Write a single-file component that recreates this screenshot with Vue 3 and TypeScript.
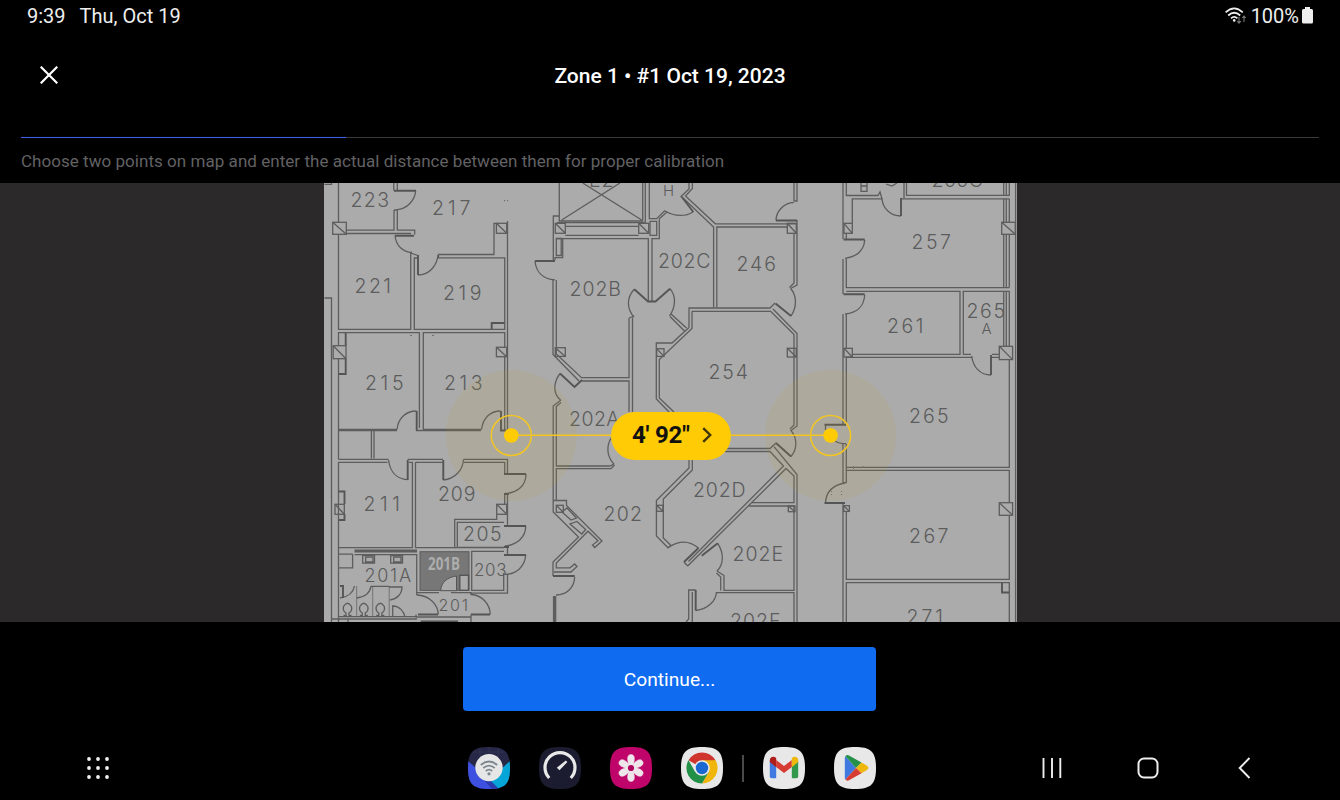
<script setup lang="ts">
interface Label { t: string; x: number; y: number; w: number; s?: number }

// Room labels: centre x, baseline y and drawn width
const labels: Label[] = [
  { t: '223', x: 369.5, y: 207, w: 36 },
  { t: '217', x: 451, y: 215, w: 36 },
  { t: '221', x: 372.5, y: 293, w: 34 },
  { t: '219', x: 462, y: 300, w: 36 },
  { t: '215', x: 384, y: 389.5, w: 36 },
  { t: '213', x: 463, y: 389.5, w: 36 },
  { t: '211', x: 381.5, y: 511, w: 34 },
  { t: '209', x: 456.5, y: 501, w: 35 },
  { t: '205', x: 482, y: 540.5, w: 36 },
  { t: '203', x: 490, y: 576, w: 30, s: 17 },
  { t: '201A', x: 387.5, y: 581.5, w: 44, s: 18 },
  { t: '201', x: 453, y: 611, w: 27, s: 16 },
  { t: '202B', x: 595, y: 296, w: 49 },
  { t: '202C', x: 684, y: 267.5, w: 50 },
  { t: '246', x: 756, y: 271, w: 37 },
  { t: '254', x: 728, y: 378.5, w: 37 },
  { t: '202A', x: 594, y: 425.5, w: 48 },
  { t: '202', x: 622.5, y: 521, w: 36 },
  { t: '202D', x: 719, y: 497, w: 50 },
  { t: '202E', x: 757.5, y: 560.5, w: 48 },
  { t: '202F', x: 755, y: 627.5, w: 48 },
  { t: '257', x: 931, y: 248.5, w: 37 },
  { t: '261', x: 905, y: 332.5, w: 34 },
  { t: '265', x: 985.5, y: 318, w: 36 },
  { t: 'A', x: 987.5, y: 334, w: 10, s: 15 },
  { t: '265', x: 928.5, y: 423, w: 37 },
  { t: '267', x: 928.5, y: 543, w: 37 },
  { t: '271', x: 924.5, y: 624, w: 34 },
  { t: '255C', x: 957, y: 187, w: 49 },
  { t: 'E2', x: 601, y: 186.5, w: 22 },
  { t: 'H', x: 668.5, y: 196, w: 9, s: 15 },
]

// Structural columns: x, y, width, height
const columns: number[][] = [
  [332.7, 222.3, 13.6, 12], [333.2, 345.7, 12.8, 13], [496.4, 223.3, 10.3, 10], [496.4, 347.3, 10.3, 9.4],
  [335, 504.3, 9.3, 10], [496.7, 504.3, 10, 10], [555.3, 223.3, 10, 10], [638.7, 223.3, 10, 10],
  [787.3, 223.3, 9, 10], [555.3, 347.7, 10, 8.7], [656.7, 348.7, 7.3, 7.7], [787.3, 348.3, 9, 8.7],
  [556.3, 505.3, 7, 7], [656.7, 505.3, 6.3, 6], [788.3, 506, 6.7, 5.7], [844, 223.3, 8.3, 10],
  [844, 348.3, 8.3, 8.7], [1001.7, 222.3, 13.6, 12], [999.3, 346.3, 13.3, 13.3], [843.7, 505.7, 5.7, 5.7],
  [999.3, 502.7, 13.3, 12.6],
]

const walls: string[] = [
  // west wing, upper rooms
  'M324.5 184.3H331.5V183M324.5 298H331.5V622M338.5 183V222M338.5 234V329.3H410.7V253M338.5 359V459.3M338.5 345V332.7H419.4V428',
  'M393.8 183V190.5M397.3 183V190.5M394 210V230.2H346.3M394 210H397.3V230.2H414.7V234.5M346 233.5H411',
  'M417 258H414.3V329.3H504.7V257.8H438.5V254.5H494V223.3H497M410.7 253L418 255.5M507.5 221V430.5M504.7 357V430.5',
  'M423.3 429.5V332.7H504.7V347M338.5 429.5H397M423.3 429.5H481M416 430.5H481M338.5 430.5H397M371.4 431V458.5M374 431V458.5',
  // west wing, lower rooms
  'M338.5 459.3H388.5M387.5 462.3H338.5V547.7H412.4V462.3H409M407.7 459.3H443M415.5 462.3H443M415.5 462.3V547.7H454.7V519.4H496.7V514',
  'M463.5 459.3H507.5V473M464 462.3H504.7V473M504.7 493.7V504M507.5 493.7V526M507.5 546V554.5M507.5 574V593.2H470',
  'M504 522.3H457.3V547.5H504M504 551.4H471.7V590.4H503.7V573M454.7 547.7H504M354.5 554.7H416.7V595',
  'M338.5 548V622M352.6 554.2V567.8H338.5M338.5 554.2H352.6M338.5 616.7H417M332 619H417M416.7 595H418M416.7 592.7H439M451 592.7H471V595M416 614.5V617H471V614.5M471 617V622M348 619V622',
  // lift, closet and 202B / 202C / 246
  'M559.3 183V221H642.7V183M645.3 183V222.7H557M561.7 220L620 183M641.7 220L582.7 183M565.3 226.3H638.7M565.3 235.3H638.7',
  'M553.3 260.5V216H559M556 238.7H648.3V301M659.3 218.7V238.7H652V301M649.3 183V218.7H656.7L665 210.5M659.3 218.7L667 212',
  'M650 221.3H656.7V235.3H650ZM556.3 238.5H561.2V255.5H556.3ZM562.7 239V257.7H555V260',
  'M689 183V189L680.5 197M692.4 183V188.5L685.5 196L715.3 223.8H796M683 198L713.6 227V307.5M788 227H716.8V307.5',
  'M794 183V201M797 183V201H794M797 220V285L790.5 288.5M794 233V283L789.5 287.5',
  'M553 280V354.5L579 381M556.3 280V354L581.5 377.7H629V318M582 381H629V412M632.5 412V317.5M629 318L634 316',
  // 254
  'M692 311.3H770.7L794 334.6V425L790 429M689 327.5V308H770L775 303M692 311.3V328.5L659.3 359.5V398L674 412M773 309L797 333.5V426L791 430.5',
  'M689 327.5L672 343H656.3V399L669.5 412.5M684.5 331L670 316.5M686.5 328L671 314',
  // 202A, 202
  'M561 400L553.2 406V512L578.5 537L553 562V576M561 402.5L556.3 406.5V466H610L614 464M556.3 500.5V468.7H611L614.5 465',
  'M556.3 500.5H566.5V505.5L602 541L594.7 547.5L592.5 545L598 540.8L588 531.2L556.3 563V567.8H570L574.7 564L577 566.5L571 572H554',
  'M553.5 500.5H556.3M562 512L571 520L576.5 518L567 508ZM570 524L581.7 534L585.7 529.5L577 521.5Z',
  // 202D, 202E, 202F
  'M689 459V468L656.4 500.5V536L668 547.8L671 545.5M692.3 459V470L663.3 499V538L671 545.5',
  'M725 448.5H770L776 443M725 451.5H770L783.5 466L688.5 561.5M774 446.7L797 474.5V622M687.7 566L786 468.5L794 476V502.7H752M684 562L687.7 566',
  'M749 506H794V590.4H724V575.5L717 571M720.7 590.4V577L716.5 573M716 592.6H794V622M695.7 590H688.7V619L686 622M692.3 592V622',
  // east wing
  'M843 183V239M846.3 183V195.5H878L880 192L882 198.8H852.3V223M846.3 233V239M901 198.8H1009.3M904 183V198M906.5 183V195.4H1009.3V183',
  'M1003.7 183V195.4M1006.3 183V195.4M1003.7 198.8V222M1006.3 198.8V222M1003.7 234V287.6M1006.3 234V287.6M1009.3 198.8V222M1009.3 234V287.6',
  'M843 259V294M846.3 259V287.6H1009.3M846.3 291.3H960V354.4H852M846 357.4H972M963.3 354.4V291.3H1009.3V346M1003.7 291.3V346M1006.3 291.3V346M963.3 354.4H971M991 357.4H999M992 354.4H999',
  'M843 314V424M846.3 314V348M846.3 357V424M843 444V482.7M846.3 444V482.7H843M846.3 467.4H1009.3V359.5M846.3 470.4H1009.3V503M843 504V622M846.3 511V579.4H1009.3V515M846.3 622V582.6H1009.3V622',
  'M1015.6 183V622',
]

const doors: string[] = [
  'M415.7 191C415 200 407 209 397 209.7', 'M395 235.5C396 246 403 252 412 252.5', 'M418 275C430 275 437 265 438 255',
  'M397 429.5C398 418 406 411 416.5 411', 'M481.5 429.5C483 418 490 411 500.5 411', 'M388.5 460C390 472 397 479 407.5 479.7',
  'M443.3 480C455 479 463 470 463.5 459.5', 'M526 474C526 486 517 493 505 493.5', 'M525.7 526C526 537 517 545 505 546',
  'M525.7 555C525 566 517 574 505 574.3', 'M340 598C347 597 353 594 354.5 586', 'M356.7 598C364 597 370 594 371 586',
  'M371 586.3H389M389 587H402C402 594 397 599 390 600', 'M392.7 616V606C400 606 404 612 405 617',
  'M418 595C430 596 438 605 438.3 614.5', 'M490.3 614.5C490 604 482 595 471 594.5', 'M535 261C536 272 543 279 555 279.8',
  'M665 211C675 217 686 216.5 693 212', 'M794 202.3C783 203 776 212 776 220.5', 'M790.7 288.5C797 296 797 307 791 316',
  'M670 288.7C677 297 675 308 669.5 316', 'M634.3 289.3C626 298 627 309 634 317', 'M560 373.5C553 383 553 394 560.5 400',
  'M614 464C607 457 606 447 611 438', 'M574.7 577C574 588 567 594.7 556 595', 'M669 547C680 540 690 541 698.5 548',
  'M791 456.5C797 450 798 438 790.5 430', 'M717.7 543.3C724 553 724 564 717 571', 'M695.7 610.5C708 609 716 601 716.5 592',
  'M882 199C883 209 891 216 901 216', 'M864.7 240C864 250 857 257 845 258.3', 'M864.7 295C864 306 857 313 845 313.8',
  'M971.7 356C973 367 980 375 991 375', 'M825.5 425V430M835 441C838 443 842 443.7 846 443.7', 'M845 483C833 485 826 492 825.5 503',
]

const leaves = [
  'M394 190.8H416M395 235.7H414M418 255V275M345.7 333V345.7M345.7 359V374H338.5M491.7 329V323H504.7M416.7 411V430.5M501 411V430.5H507',
  'M407.7 460V480M443.3 460V480M504 474H526M504 526H526M504 555H526M504 547H509M504 494H509M471 614.5H490M418 614.5H438M338.5 491.5H344.5V504M344.5 514V520H339',
  'M535 261H555M681.7 196.7L693.3 212M776 220.5H797M791 316L775.5 303.5M670 288.7L655.5 301.5H648L634.3 289.3M560 373.5L574.5 387L582 380',
  'M574.7 576H553M698.5 548L684 562M776 443L791 456.5M701.7 555.7L717.7 543.3M695.7 590V610.5M901 198V216M843.5 239.5H864.7M843.5 294.3H864.7',
  'M991 355V375M824.5 424.7H846M824.5 503H845M1002 582.7V592.5H1009M340 586H343V598M420.7 621.5H458',
].join('')

const toilets = [347.5, 363.8, 380.3]
const petals = [0, 60, 120, 180, 240, 300]
const points = [{ x: 511.3, y: 435.5 }, { x: 830.6, y: 435.5 }]
const dots = Array.from({ length: 9 }, (_, i) => ({ x: 3 + (i % 3) * 9, y: 3 + Math.floor(i / 3) * 9 }))
</script>

<template>
  <div class="screen">
    <div class="status">
      <span class="time">9:39</span>
      <span class="date">Thu, Oct 19</span>
      <span class="grow"></span>
      <svg class="wifi" width="22" height="18" viewBox="0 0 22 18" fill="none" stroke="#eee" stroke-width="1.7">
        <path d="M.6 5.4Q9.2 -2.6 17.8 5.4M3.2 8.5Q9.2 3 15.2 8.5M6 11.4Q9.2 8.4 12.4 11.4" />
        <circle cx="9.2" cy="13.4" r="1.3" fill="#eee" stroke="none" />
        <path d="M14 10V16M12.2 14.2L14 16.2L15.8 14.2M19 15V9M17.2 11L19 9L20.8 11" stroke="#777" stroke-width="1.1" />
      </svg>
      <span class="pct">100%</span>
      <svg class="batt" width="11" height="17" viewBox="0 0 11 17"><path d="M3 0H8V2H9.5Q11 2 11 3.5V15Q11 16.5 9.5 16.5H1.5Q0 16.5 0 15V3.5Q0 2 1.5 2H3Z" fill="#eee" /></svg>
    </div>

    <header class="bar">
      <svg class="close" width="18" height="18" viewBox="0 0 18 18"><path d="M.7 .7L17.3 17.3M17.3 .7L.7 17.3" stroke="#fff" stroke-width="2.2" /></svg>
      <h1>Zone 1 • #1 Oct 19, 2023</h1>
    </header>
    <div class="progress"><div class="done"></div></div>
    <p class="hint">Choose two points on map and enter the actual distance between them for proper calibration</p>

    <main class="stage">
      <svg class="plan" width="1340" height="439" viewBox="0 183 1340 439">
        <rect x="324" y="183" width="693" height="439" fill="#ababab" />
        <rect x="420" y="551.7" width="49" height="38.7" fill="#777" stroke="#5c5c5c" />
        <path d="M440.7 590.7C441 582 448 577 456.5 576V590.7Z" fill="#ababab" stroke="#555" />
        <rect x="459.8" y="575.3" width="8.7" height="15" fill="#ababab" stroke="#555" stroke-width="1.4" />
        <g fill="none" stroke="#5d5d5d" stroke-width="1.3">
          <path v-for="(d, i) in walls" :key="'w' + i" :d="d" />
          <path v-for="(d, i) in doors" :key="'d' + i" :d="d" />
          <path :d="leaves" stroke="#555" stroke-width="1.9" />
          <path d="M354.5 551H417" stroke-width="2.8" />
          <path d="M554.6 596V622" stroke-width="3.4" />
          <path d="M362.7 555.6H374.5V563.2H362.7ZM365.7 557.2H373V562H365.7ZM390.7 555.6H402.5V563.2H390.7ZM393.7 557.2H401V562H393.7Z" />
          <path d="M356.7 586V616M372.7 586V616M389.2 586V616" stroke-width=".7" />
          <path v-for="x in toilets" :key="x" :d="`M${x - 4} 615.5H${x - 1.5}V613Q${x - 5} 611 ${x - 4} 606.5Q${x} 600 ${x + 4} 606.5Q${x + 5} 611 ${x + 1.5} 613V615.5H${x + 4}`" />
          <g v-for="(c, i) in columns" :key="'c' + i">
            <rect :x="c[0]" :y="c[1]" :width="c[2]" :height="c[3]" />
            <path :d="`M${c[0]} ${c[1]}l${c[2]} ${c[3]}`" />
          </g>
          <path d="M861 183V191.3H867V183M861 186H867M886 184L892 186L897 183" />
        </g>
        <g fill="#707070">
          <rect x="504" y="200" width="1.2" height="1.2" /><rect x="507" y="200" width="1.2" height="1.2" />
          <rect x="410" y="335" width="2" height="1" /><rect x="432" y="335" width="2" height="1" />
          <rect x="831" y="491" width="1" height="1" /><rect x="831" y="494" width="1" height="1" />
          <rect x="841" y="491" width="1" height="1" /><rect x="841" y="494" width="1" height="1" />
          <rect x="853" y="466" width="1" height="3" /><rect x="863" y="466" width="1" height="2" />
        </g>
        <g class="rooms">
          <text v-for="(l, i) in labels" :key="'l' + i" :x="l.x - l.w / 2 - 1" :y="l.y" :font-size="l.s ?? 19.5" :textLength="l.w + 2.5">{{ l.t }}</text>
        </g>
        <text class="selected" x="444" y="569.5" text-anchor="middle" textLength="32" lengthAdjust="spacingAndGlyphs">201B</text>

        <circle v-for="p in points" :key="p.x" :cx="p.x" :cy="p.y" r="65.5" fill="#c9ab2b" fill-opacity=".1" />
        <path d="M511 435.3H830" stroke="#f6c51c" stroke-width="1.5" />
        <g v-for="p in points" :key="'p' + p.x">
          <circle :cx="p.x" :cy="p.y" r="20" fill="none" stroke="#f3c522" stroke-width="1.5" />
          <circle :cx="p.x" :cy="p.y" r="7.3" fill="#ffcb05" />
        </g>
      </svg>
      <button class="distance">
        <span>4' 92"</span>
        <svg width="10" height="16" viewBox="0 0 10 16"><path d="M1.2 1.2L8.2 8L1.2 14.8" fill="none" stroke="#40360a" stroke-width="2.4" /></svg>
      </button>
    </main>

    <div class="actions"><button class="continue">Continue...</button></div>

    <nav class="dock">
      <svg class="grid" width="24" height="24" viewBox="0 0 24 24" fill="#f2f2f2"><circle v-for="(d, i) in dots" :key="i" :cx="d.x" :cy="d.y" r="1.9" /></svg>
      <div class="apps">
        <svg width="42" height="42" viewBox="0 0 42 42">
          <defs><clipPath id="sq"><path d="M21 0C37 0 42 5 42 21S37 42 21 42S0 37 0 21S5 0 21 0Z" /></clipPath></defs>
          <g clip-path="url(#sq)">
            <rect width="42" height="42" fill="#272748" />
            <path d="M12 0V10M21 0V10M30 0V10M5 5H37" stroke="#393958" stroke-width=".6" />
            <path d="M0 14L32 42H0Z" fill="#3d50e0" /><path d="M42 14V42H30L21 33Z" fill="#06a5d7" /><path d="M14 31L22 33L31 42H24Z" fill="#2b3cae" />
            <circle cx="21" cy="20.6" r="13.7" fill="#e6e6e6" />
            <path d="M12.8 18Q21 11 29.2 18M15.3 21Q21 16.2 26.7 21M17.8 24Q21 21.3 24.2 24" fill="none" stroke="#7d8791" stroke-width="1.8" />
            <circle cx="21" cy="26.8" r="1.6" fill="#7d8791" />
          </g>
        </svg>
        <svg width="42" height="42" viewBox="0 0 42 42">
          <path d="M21 0C37 0 42 5 42 21S37 42 21 42S0 37 0 21S5 0 21 0Z" fill="#1b1c30" />
          <path d="M10.2 31A15 15 0 1 1 31.8 31" fill="none" stroke="#e9e9e9" stroke-width="3.2" />
          <path d="M26.8 13.4L28.4 15L20.5 23.2L17.8 20.8Z" fill="#e9e9e9" />
        </svg>
        <svg width="42" height="42" viewBox="0 0 42 42">
          <path d="M21 0C37 0 42 5 42 21S37 42 21 42S0 37 0 21S5 0 21 0Z" fill="#c0056a" />
          <path v-for="a in petals" :key="a" d="M19.4 19C16.8 13 16.8 7.6 21 7.6S25.2 13 22.6 19Z" fill="#eee6ea" stroke="#eee6ea" stroke-width=".5" :transform="`rotate(${a} 21 21)`" />
          <circle cx="21" cy="21" r="3.1" fill="#b0055f" />
        </svg>
        <svg width="42" height="42" viewBox="0 0 42 42">
          <path d="M21 0C37 0 42 5 42 21S37 42 21 42S0 37 0 21S5 0 21 0Z" fill="#e8e8e8" />
          <path d="M21 21L7.5 13.2A15.6 15.6 0 0 1 34.5 13.2Z" fill="#cf352c" />
          <path d="M21 13.2H34.5A15.6 15.6 0 0 1 21 36.6L27.8 24.9Z" fill="#f0b60c" />
          <path d="M7.5 13.2A15.6 15.6 0 0 0 21 36.6L27.8 24.9L14.2 24.9Z" fill="#229047" />
          <circle cx="21" cy="21" r="7.8" fill="#e8e8e8" /><circle cx="21" cy="21" r="6.2" fill="#1c68d2" />
        </svg>
        <i class="sep"></i>
        <svg width="42" height="42" viewBox="0 0 42 42">
          <path d="M21 0C37 0 42 5 42 21S37 42 21 42S0 37 0 21S5 0 21 0Z" fill="#e8e8e8" />
          <path d="M6.8 14V29.5Q6.8 31.3 8.6 31.3H13.2V18Z" fill="#4079e0" />
          <path d="M28.8 18V31.3H33.4Q35.2 31.3 35.2 29.5V14Z" fill="#30974b" />
          <path d="M13.2 13L21 19L28.8 13V20L21 26L13.2 20Z" fill="#d63c31" />
          <path d="M6.8 15V13.6C6.8 9.8 10.5 8.8 13.2 11V20.2Z" fill="#ae1f1b" />
          <path d="M35.2 15V13.6C35.2 9.8 31.5 8.8 28.8 11V20.2Z" fill="#efb70c" />
        </svg>
        <svg width="42" height="42" viewBox="0 0 42 42">
          <path d="M21 0C37 0 42 5 42 21S37 42 21 42S0 37 0 21S5 0 21 0Z" fill="#e8e8e8" />
          <path d="M11.4 9.2L22 20.9L11.4 32.6Q10.8 32 10.8 30.8V11Q10.8 9.8 11.4 9.2Z" fill="#4079e0" />
          <path d="M11.4 9.2Q12.8 7.4 15 8.6L27.5 15.6L22 20.9Z" fill="#279149" />
          <path d="M27.5 15.6L33 18.7Q35.6 20.9 33 23.1L27.5 26.2L22 20.9Z" fill="#efb70c" />
          <path d="M11.4 32.6Q12.8 34.4 15 33.2L27.5 26.2L22 20.9Z" fill="#d63c31" />
        </svg>
      </div>
      <div class="keys">
        <svg width="20" height="22" viewBox="0 0 20 22"><path d="M1.5 1V21M10 1V21M18.3 1V21" stroke="#eee" stroke-width="1.9" /></svg>
        <svg width="22" height="22" viewBox="0 0 22 22"><rect x="1.5" y="1.5" width="19" height="19" rx="5.5" fill="none" stroke="#eee" stroke-width="2" /></svg>
        <svg width="13" height="22" viewBox="0 0 13 22"><path d="M11.5 1L1.7 11L11.5 21" fill="none" stroke="#eee" stroke-width="1.9" /></svg>
      </div>
    </nav>
  </div>
</template>

<style>
body { background: #000; }
</style>

<style scoped>
.screen { width: 1340px; height: 800px; overflow: hidden; background: #000; color: #fff; font-family: Roboto, "Liberation Sans", sans-serif; display: flex; flex-direction: column; }
.status { height: 33px; padding: 0 27px 0 27px; display: flex; align-items: center; font-size: 20px; color: #eee; box-sizing: border-box; }
.time { margin-right: 14px; }
.grow { flex: 1; }
.wifi { margin: 0 4px 0 -1px; }
.batt { margin-left: 3px; margin-top: -2px; }
.bar { height: 86px; padding: 0 40px; display: grid; grid-template-columns: 18px 1fr 18px; align-items: center; }
.close { margin-top: -2px; }
h1 { margin: 0; text-align: center; font-size: 21px; font-weight: 500; line-height: 24px; }
.progress { margin: 18px 21px 0; height: 1px; background: #3a3a3a; flex: none; }
.done { width: 325px; height: 1px; background: #3d60e0; box-shadow: 0 0 1px #1c2c70; }
.hint { margin: 0 21px; height: 45px; line-height: 47px; font-size: 17px; letter-spacing: .04px; color: #626264; white-space: nowrap; }
.stage { position: relative; height: 439px; background: #2b292a; flex: none; }
.plan { display: block; }
.rooms { fill: #5c5c5c; font-family: Inter, "Open Sans", sans-serif; font-weight: 300; }
.selected { fill: #adadad; font: 700 17px "Open Sans", sans-serif; }
.distance { position: absolute; left: 611px; top: 229px; width: 120px; height: 48px; border: 0; border-radius: 24px; background: #ffcb05; color: #111; font: 700 24px Roboto, sans-serif; letter-spacing: -.2px; padding: 0 19px 1px 21px; display: flex; align-items: center; justify-content: space-between; white-space: nowrap; }
.actions { height: 114px; display: flex; justify-content: center; padding: 25px 1px 0 0; box-sizing: border-box; }
.continue { width: 413px; height: 64px; border: 0; border-radius: 4px; background: #0f6cf0; color: #fff; font: 400 19.2px Roboto, sans-serif; padding-top: 2px; }
.dock { height: 64px; display: flex; align-items: center; padding: 1px 89px 0 85.5px; }
.grid { width: 24px; }
.apps { margin-left: 358.5px; display: flex; align-items: center; gap: 29px; }
.sep { width: 2px; height: 27px; background: #4a4a4a; margin: 0 -10.2px; }
.keys { margin-left: auto; display: flex; align-items: center; gap: 75px; }
.keys svg:last-child { margin-left: 4.5px; }
</style>
